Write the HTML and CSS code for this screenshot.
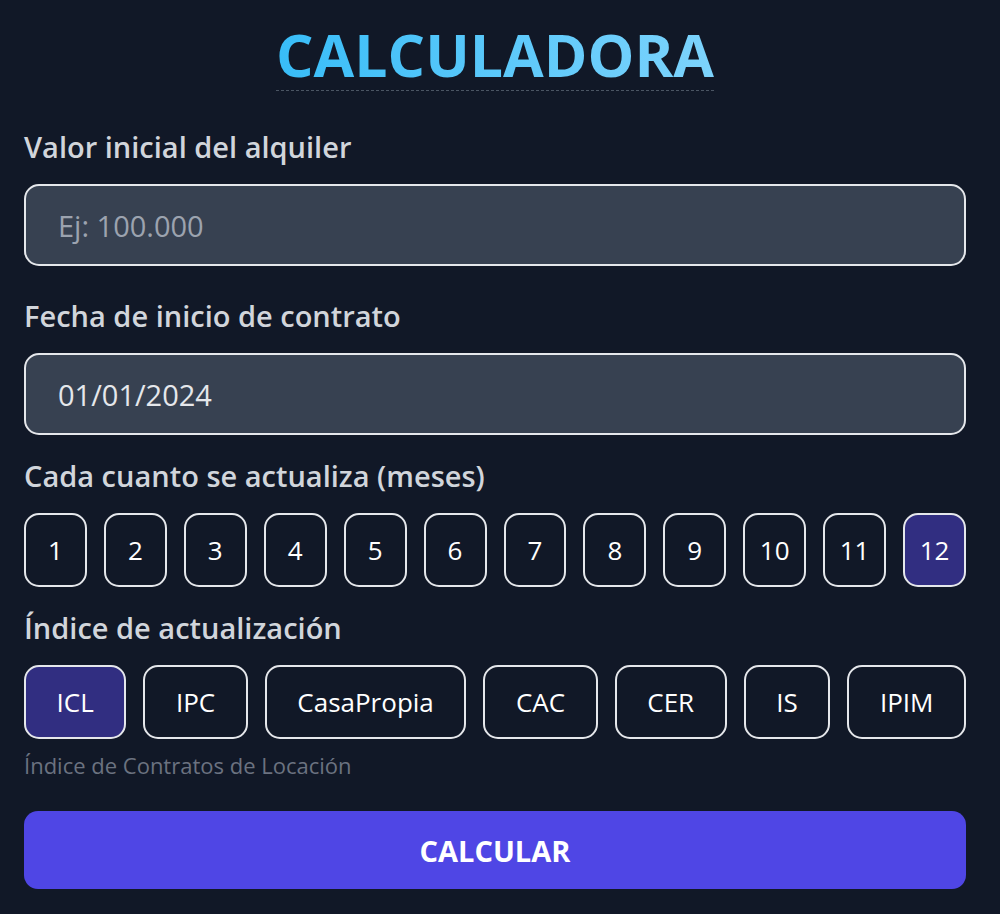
FILE: index.html
```html
<!DOCTYPE html>
<html>
  <head>
    <title>Calculadora de alquiler</title>
    <link rel="stylesheet" href="styles.css">
  </head>
  <body>
    <div class="calc">
      <div class="calc-head">
        <h1 class="calc-title">CALCULADORA</h1>
      </div>

      <div class="field">
        <label class="field-label" for="monto">Valor inicial del alquiler</label>
        <input class="field-input" id="monto" type="text" placeholder="Ej: 100.000">
      </div>

      <div class="field field-date">
        <label class="field-label" for="fecha">Fecha de inicio de contrato</label>
        <input class="field-input" id="fecha" type="text" value="01/01/2024">
      </div>

      <div class="field field-group">
        <div class="field-label">Cada cuanto se actualiza (meses)</div>
        <div class="months">
          <button class="opt">1</button>
          <button class="opt">2</button>
          <button class="opt">3</button>
          <button class="opt">4</button>
          <button class="opt">5</button>
          <button class="opt">6</button>
          <button class="opt">7</button>
          <button class="opt">8</button>
          <button class="opt">9</button>
          <button class="opt">10</button>
          <button class="opt">11</button>
          <button class="opt active">12</button>
        </div>
      </div>

      <div class="field field-index">
        <div class="field-label">Índice de actualización</div>
        <div class="indexes">
          <button class="opt active">ICL</button>
          <button class="opt">IPC</button>
          <button class="opt">CasaPropia</button>
          <button class="opt">CAC</button>
          <button class="opt">CER</button>
          <button class="opt">IS</button>
          <button class="opt">IPIM</button>
        </div>
        <div class="hint">Índice de Contratos de Locación</div>
      </div>

      <button class="submit">CALCULAR</button>
    </div>
  </body>
</html>
```

FILE: styles.css
```css
body {
  margin: 0;
  padding: 24px 34px 24px 24px;
  background: #111827;
  color: #d1d5db;
  font-family: 'Open Sans', 'Noto Sans', sans-serif;
}
.calc {
  width: 942px;
}
.calc-head {
  text-align: center;
  margin-bottom: 38px;
}
.calc-title {
  display: inline-block;
  margin: 0;
  font-size: 59px;
  line-height: 60px;
  font-weight: 700;
  padding-bottom: 6px;
  border-bottom: 1px dashed #4b5563;
  background: linear-gradient(90deg, #38bdf8, #7dd3fc);
  -webkit-background-clip: text;
  background-clip: text;
  color: transparent;
}
.field {
  margin-bottom: 32px;
}
.field-date {
  margin-bottom: 23px;
}
.field-group {
  margin-bottom: 23px;
}
.field-index {
  margin-bottom: 32px;
}
.field-label {
  display: block;
  font-size: 29px;
  line-height: 36px;
  font-weight: 600;
  color: #d1d5db;
  margin-bottom: 19px;
}
.field-input {
  display: block;
  box-sizing: border-box;
  width: 100%;
  height: 82px;
  padding: 0 32px;
  background: #374151;
  border: 2px solid #e5e7eb;
  border-radius: 15px;
  color: #e5e7eb;
  font-family: inherit;
  font-size: 29px;
  outline: none;
}
.field-input::placeholder {
  color: #9ca3af;
}
.months {
  display: grid;
  grid-template-columns: repeat(12, 1fr);
  gap: 17px;
}
.indexes {
  display: flex;
  gap: 17px;
}
.indexes .opt {
  flex: 1 1 auto;
}
.opt {
  height: 74px;
  padding: 0 20px;
  background: transparent;
  border: 2px solid #e5e7eb;
  border-radius: 15px;
  color: #ffffff;
  font-family: inherit;
  font-size: 26px;
  cursor: pointer;
}
.months .opt {
  padding: 0;
}
.opt.active {
  background: #312e81;
}
.hint {
  margin-top: 12px;
  font-size: 22px;
  line-height: 28px;
  color: #6b7280;
}
.submit {
  display: block;
  width: 100%;
  height: 78px;
  background: #4f46e5;
  border: none;
  border-radius: 14px;
  color: #ffffff;
  font-family: inherit;
  font-size: 29px;
  font-weight: 700;
  cursor: pointer;
}
```
